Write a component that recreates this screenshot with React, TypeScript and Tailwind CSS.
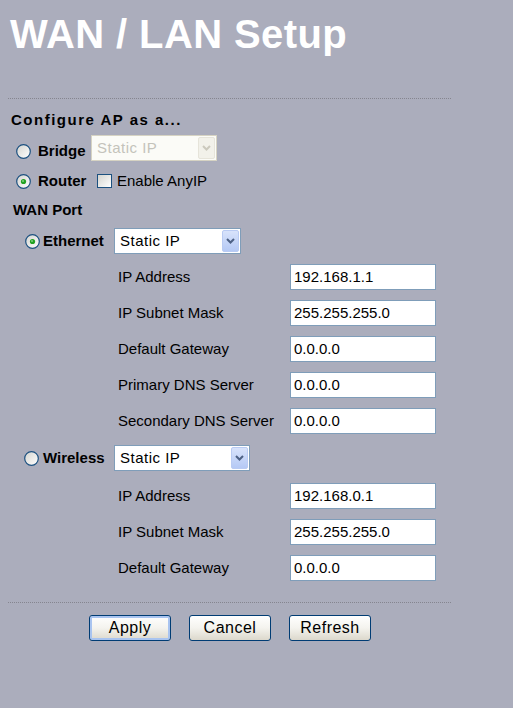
import React from 'react'

// XP style radio button
function Radio({ checked = false, id }: { checked?: boolean; id: string }) {
  return (
    <svg width="15" height="15" viewBox="0 0 15 15" className="shrink-0">
      <defs>
        <linearGradient id={id} x1="0" y1="0" x2="1" y2="1">
          <stop offset="0%" stopColor="#d4d4cf" />
          <stop offset="100%" stopColor="#ffffff" />
        </linearGradient>
      </defs>
      <circle cx="7.5" cy="7.5" r="6.8" fill={`url(#${id})`} stroke="#1c5180" strokeWidth="1.2" />
      {checked && (
        <>
          <circle cx="7.5" cy="7.5" r="2.6" fill="#21a121" />
          <circle cx="7" cy="7" r="1" fill="#7ed27e" />
        </>
      )}
    </svg>
  )
}

function Chevron({ color }: { color: string }) {
  return (
    <svg width="9" height="6" viewBox="0 0 9 6">
      <path d="M1 1 L4.5 4.5 L8 1" fill="none" stroke={color} strokeWidth="2" />
    </svg>
  )
}

interface SelectProps {
  width: string;
  disabled?: boolean;
  className?: string;
}

function Select({ width, disabled = false, className = '' }: SelectProps) {
  return (
    <div
      className={`${width} ${className} flex h-[26px] items-center border p-px ${
        disabled ? 'border-[#d6d3c3] bg-[#fbfbf7]' : 'border-[#7f9db9] bg-white'
      }`}
    >
      <span
        className={`flex-1 pl-[4px] text-[15px] tracking-[0.5px] ${
          disabled ? 'text-[#c4c3bb]' : 'text-black'
        }`}
      >
        Static IP
      </span>
      <div
        className={`flex h-full w-[17px] items-center justify-center rounded-[2px] border ${
          disabled
            ? 'border-[#e6e4da] bg-[#f2f1ea]'
            : 'border-[#b9cbf3] bg-gradient-to-b from-[#d8e3fb] to-[#b5c9f5]'
        }`}
      >
        <Chevron color={disabled ? '#cbc9bd' : '#4d6185'} />
      </div>
    </div>
  )
}

function Field({ label, value }: { label: string; value: string }) {
  return (
    <div className="flex h-[36px] items-center pl-[118px]">
      <span className="w-[172px] text-[15px] text-black">{label}</span>
      <div className="flex h-[26px] w-[146px] items-center border border-[#7f9db9] bg-white pl-[3px] text-[15px] text-black">
        {value}
      </div>
    </div>
  )
}

function XpButton({ label, focused = false }: { label: string; focused?: boolean }) {
  return (
    <button
      className={`h-[26px] w-[82px] rounded-[3px] border border-[#003c74] bg-gradient-to-b from-[#ffffff] via-[#f4f3ee] to-[#dcd8cc] text-[16px] tracking-[0.5px] text-black ${
        focused ? 'shadow-[inset_0_0_0_2px_#a9c4f0]' : ''
      }`}
    >
      {label}
    </button>
  )
}

export default function App() {
  return (
    <div className="min-h-screen bg-[#abadbc] font-['Liberation_Sans',Arial,sans-serif]">
      <div className="pl-[10px] pt-[14px]">
        <h1 className="text-[40px] font-bold leading-none tracking-[0.4px] text-white">WAN / LAN Setup</h1>
      </div>

      <div className="mx-[8px] mt-[44px] w-[443px] border-t border-dotted border-[#85858f]" />

      <div className="mt-[11px] flex h-[20px] items-center pl-[11px] text-[15px] font-bold tracking-[1.5px] text-black">
        Configure AP as a...
      </div>

      {/* Bridge */}
      <div className="mt-[5px] flex h-[32px] items-center pl-[16px]">
        <Radio id="r-bridge" />
        <span className="w-[60px] pl-[7px] text-[15px] font-bold text-black">Bridge</span>
        <Select width="w-[126px]" disabled className="self-start" />
      </div>

      {/* Router */}
      <div className="flex h-[28px] items-center pl-[16px]">
        <Radio id="r-router" checked />
        <span className="w-[66px] pl-[7px] text-[15px] font-bold text-black">Router</span>
        <div className="h-[14px] w-[15px] border border-[#1c5180] bg-gradient-to-br from-[#d4d4cf] to-white" />
        <span className="pl-[5px] text-[15px] text-black">Enable AnyIP</span>
      </div>

      <div className="flex h-[30px] items-center pl-[13px] text-[15px] font-bold text-black">WAN Port</div>

      {/* Ethernet */}
      <div className="flex h-[32px] items-center pl-[25px]">
        <Radio id="r-eth" checked />
        <span className="w-[74px] pl-[3px] text-[15px] font-bold text-black">Ethernet</span>
        <Select width="w-[127px]" />
      </div>

      <div className="mt-[2px]">
        <Field label="IP Address" value="192.168.1.1" />
        <Field label="IP Subnet Mask" value="255.255.255.0" />
        <Field label="Default Gateway" value="0.0.0.0" />
        <Field label="Primary DNS Server" value="0.0.0.0" />
        <Field label="Secondary DNS Server" value="0.0.0.0" />
      </div>

      {/* Wireless */}
      <div className="flex h-[38px] items-center pl-[24px]">
        <Radio id="r-wl" />
        <span className="w-[75px] pl-[4px] text-[15px] font-bold text-black">Wireless</span>
        <Select width="w-[136px]" />
      </div>

      <div className="mt-px">
        <Field label="IP Address" value="192.168.0.1" />
        <Field label="IP Subnet Mask" value="255.255.255.0" />
        <Field label="Default Gateway" value="0.0.0.0" />
      </div>

      <div className="mx-[8px] mt-[16px] w-[443px] border-t border-dotted border-[#85858f]" />

      <div className="mt-[12px] flex gap-[18px] pl-[89px]">
        <XpButton label="Apply" focused />
        <XpButton label="Cancel" />
        <XpButton label="Refresh" />
      </div>
    </div>
  )
}
